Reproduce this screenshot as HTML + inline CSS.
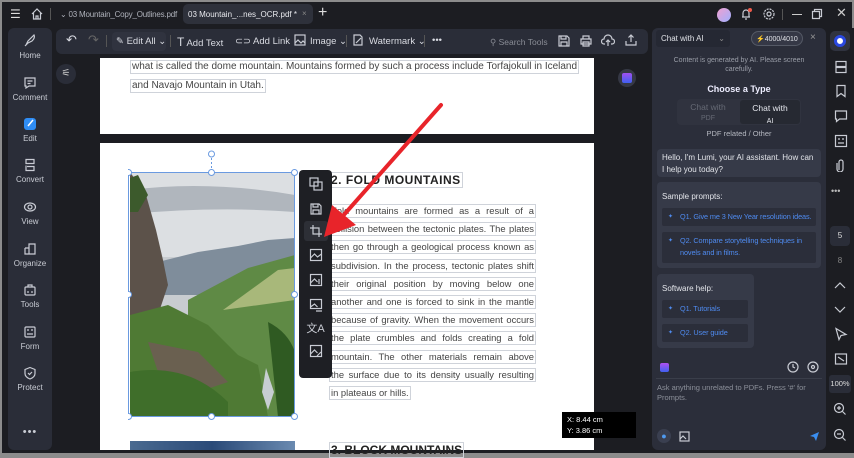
<!DOCTYPE html>
<html><head><meta charset="utf-8"><style>
*{box-sizing:border-box;margin:0;padding:0}
body{width:854px;height:457px;overflow:hidden;background:#8c8c8c;font-family:"Liberation Sans",sans-serif;position:relative}
.a{position:absolute;white-space:nowrap}
#app{left:2px;top:2px;width:850px;height:451px;background:#1c1d22}
.tb{color:#d5d7de;font-size:8px}
.side{left:8px;top:28px;width:44px;height:422px;background:#2a2d38;border-radius:6px}
.si{position:absolute;left:0;width:44px;text-align:center;color:#c9ccd4;font-size:8px}
.si svg{display:block;margin:0 auto 3px}
.tool{left:56px;top:29px;width:592px;height:25px;background:#2a2d38;border-radius:6px}
.tt{position:absolute;top:7px;color:#d9dbe2;font-size:9.5px;white-space:nowrap;line-height:12px}
.page{background:#fff}
.ln{position:absolute;left:130px;font-family:"Liberation Sans",sans-serif;font-size:10px;color:#444;white-space:nowrap;border:1px solid #cfd3da;line-height:12px;padding:0 1px}
.j{left:329px;width:207px;font-size:9.4px;text-align:justify;text-align-last:justify;white-space:normal;overflow:hidden;height:14px}
.chat{left:652px;top:28px;width:174px;height:422px;background:#2b2e3a;border-radius:6px}
.rail{left:828px;top:28px;width:26px;height:425px;background:#1c1d22}
.bub{position:absolute;background:#363a48;border-radius:4px;color:#e3e5ea;font-size:8px;line-height:12px}
.q{position:absolute;background:#2b2e3a;color:#4f8bf0;font-size:7.3px;line-height:12px;padding:3px 4px 3px 18px;border-radius:2px;letter-spacing:-.1px}
.q:before{content:"✦";position:absolute;left:6px;top:3px;font-size:6px;color:#4f8bf0}
.ic{stroke:#c9ccd4;fill:none;stroke-width:1.2}
.ft svg{display:block;margin:7px auto 0}
</style></head><body>
<div id="app" class="a"></div>
<!-- title bar -->
<div class="a tb" style="left:10px;top:7px;font-size:12px;color:#ddd">☰</div>
<svg class="a" style="left:30px;top:7px" width="14" height="14" viewBox="0 0 14 14"><path class="ic" d="M2 7L7 2l5 5M3.5 6v6h7V6M6 12V9h2v3"/></svg>
<div class="a" style="left:50px;top:8px;width:1px;height:12px;background:#555"></div>
<div class="a tb" style="left:60px;top:10px;color:#aeb1ba;letter-spacing:-.2px">⌄ 03 Mountain_Copy_Outlines.pdf</div>
<div class="a" style="left:183px;top:4px;width:130px;height:20px;background:#2e313b;border-radius:5px"></div>
<div class="a tb" style="left:188px;top:10px;color:#e8e9ee">03 Mountain_...nes_OCR.pdf *</div>
<div class="a tb" style="left:302px;top:9px;color:#888">×</div>
<div class="a" style="left:318px;top:4px;color:#ddd;font-size:16px">+</div>
<div class="a" style="left:717px;top:8px;width:14px;height:14px;border-radius:50%;background:linear-gradient(135deg,#f0a0d0,#a0b0ff)"></div>
<svg class="a" style="left:739px;top:7px" width="14" height="14"><path class="ic" d="M3 10h8M4 10V6a3 3 0 016 0v4M6 12h2"/><circle cx="11" cy="3" r="2" fill="#f05a4a"/></svg>
<svg class="a" style="left:762px;top:7px" width="14" height="14"><circle class="ic" cx="7" cy="7" r="2"/><circle class="ic" cx="7" cy="7" r="5" stroke-dasharray="2 1"/></svg>
<div class="a" style="left:782px;top:9px;width:1px;height:11px;background:#555"></div>
<div class="a" style="left:792px;top:14px;width:10px;height:1px;background:#ccc"></div>
<svg class="a" style="left:811px;top:8px" width="12" height="12"><path class="ic" d="M1.5 3.5h7v7h-7zM3.5 3.5V1.5h7v7h-2"/></svg>
<div class="a" style="left:836px;top:5px;color:#ccc;font-size:13px">✕</div>
<!-- sidebar -->
<div class="a side"></div>
<div class="si" style="left:8px;top:34px"><svg width="14" height="14"><path class="ic" d="M3 11l2-4 6-6c1 2 0 4-2 6l-4 2zM3 11l-1 1"/></svg>Home</div>
<div class="si" style="left:8px;top:76px"><svg width="14" height="14"><path class="ic" d="M2 2h10v8H6l-3 2v-2H2zM4.5 5h5M4.5 7.5h3"/></svg>Comment</div>
<div class="si" style="left:8px;top:116px"><svg width="15" height="15"><rect x="1" y="2" width="12" height="12" rx="3" fill="#2f8df5"/><path d="M5 10l5-6" stroke="#fff" stroke-width="1.5"/></svg>Edit</div>
<div class="si" style="left:8px;top:158px"><svg width="14" height="14"><path class="ic" d="M3 1.5h8v4H3zM4 8.5h7v4H3v-5"/></svg>Convert</div>
<div class="si" style="left:8px;top:200px"><svg width="14" height="14"><ellipse class="ic" cx="7" cy="7" rx="5.5" ry="4"/><circle class="ic" cx="7" cy="7" r="2"/></svg>View</div>
<div class="si" style="left:8px;top:242px"><svg width="14" height="14"><path class="ic" d="M6 2h6v10H6zM2 6h4M2 6v6h4"/></svg>Organize</div>
<div class="si" style="left:8px;top:283px"><svg width="14" height="14"><rect class="ic" x="2" y="4" width="10" height="8" rx="1"/><path class="ic" d="M5 4V2h4v2M5 8v2M9 8v2"/></svg>Tools</div>
<div class="si" style="left:8px;top:325px"><svg width="14" height="14"><rect class="ic" x="2" y="2" width="10" height="10" rx="1"/><path class="ic" d="M4 5h2M8 5h2M4 9h6"/></svg>Form</div>
<div class="si" style="left:8px;top:366px"><svg width="14" height="14"><path class="ic" d="M7 1.5l5 2v4c0 3-2.5 4.5-5 5.5C4.5 12 2 10.5 2 7.5v-4zM5 7l1.5 1.5L9 6"/></svg>Protect</div>
<div class="si" style="left:8px;top:426px;font-size:11px;letter-spacing:1px">•••</div>
<!-- toolbar -->
<div class="a tool"></div>
<div class="tt" style="left:66px;top:34px;font-size:13px">↶</div>
<div class="tt" style="left:88px;top:34px;font-size:13px;color:#666">↷</div>
<div class="a" style="left:106px;top:35px;width:1px;height:12px;background:#555"></div>
<div class="a" style="left:112px;top:32px;width:54px;height:19px;background:#30333f;border-radius:4px"></div>
<div class="tt" style="left:116px;top:36px">✎ Edit All ⌄</div>
<div class="a" style="left:170px;top:35px;width:1px;height:12px;background:#555"></div>
<div class="tt" style="left:177px;top:36px"><span style="font-size:12px">T</span> Add Text</div>
<div class="tt" style="left:235px;top:36px">⊂⊃ Add Link</div>
<svg class="a" style="left:294px;top:34px" width="12" height="12"><rect class="ic" x="1" y="1" width="10" height="10"/><path class="ic" d="M1 9l3-3 3 3 2-2 2 2"/></svg>
<div class="tt" style="left:310px;top:36px">Image ⌄</div>
<div class="a" style="left:346px;top:35px;width:1px;height:12px;background:#555"></div>
<svg class="a" style="left:352px;top:34px" width="12" height="12"><path class="ic" d="M2 1h6l2 2v8H2z"/><path class="ic" d="M4 9l5-5"/></svg>
<div class="tt" style="left:369px;top:36px">Watermark ⌄</div>
<div class="a" style="left:424px;top:35px;width:1px;height:12px;background:#555"></div>
<div class="tt" style="left:432px;top:35px">•••</div>
<div class="tt" style="left:490px;top:36px;color:#8a8d96;font-size:8.5px">⚲ Search Tools</div>
<svg class="a" style="left:557px;top:34px" width="14" height="14"><path class="ic" d="M2 2h8l2 2v8H2zM4 2v3h5V2M4 12V8h6v4"/></svg>
<svg class="a" style="left:579px;top:34px" width="14" height="14"><path class="ic" d="M4 5V2h6v3M2 5h10v5H2zM4 8h6v4H4z"/></svg>
<svg class="a" style="left:601px;top:34px" width="14" height="14"><path class="ic" d="M4 10H3a2.5 2.5 0 010-5 4 4 0 018 0 2.5 2.5 0 010 5h-1M7 12V6M5 8l2-2 2 2"/></svg>
<svg class="a" style="left:624px;top:33px" width="14" height="14"><path class="ic" d="M7 9V2M4.5 4.5L7 2l2.5 2.5M2 8v4h10V8"/></svg>
<!-- doc -->
<div class="a" style="left:56px;top:64px;width:20px;height:20px;border-radius:50%;background:#2a2d38;color:#ccc;font-size:10px;text-align:center;line-height:20px">⚟</div>
<div class="a" style="left:618px;top:69px;width:18px;height:18px;border-radius:50%;background:#353845"></div>
<div class="a" style="left:622px;top:73px;width:10px;height:10px;border-radius:2px;background:linear-gradient(#a050f0,#4060f0)"></div>
<div class="a page" style="left:100px;top:58px;width:494px;height:76px"></div>
<div class="ln" style="top:60px">what is called the dome mountain. Mountains formed by such a process include Torfajokull in Iceland</div>
<div class="ln" style="top:79px">and Navajo Mountain in Utah.</div>
<div class="a page" style="left:100px;top:143px;width:494px;height:307px"></div>
<div class="ln" style="left:329px;top:172px;font-weight:bold;font-size:12px;color:#222;letter-spacing:.5px;line-height:14px">2. FOLD MOUNTAINS</div>
<div class="ln j" style="top:204px">Fold mountains are formed as a result of a</div>
<div class="ln j" style="top:222px">collision between the tectonic plates. The plates</div>
<div class="ln j" style="top:240px">then go through a geological process known as</div>
<div class="ln j" style="top:259px">subdivision. In the process, tectonic plates shift</div>
<div class="ln j" style="top:277px">their original position by moving below one</div>
<div class="ln j" style="top:295px">another and one is forced to sink in the mantle</div>
<div class="ln j" style="top:313px">because of gravity. When the movement occurs</div>
<div class="ln j" style="top:331px">the plate crumbles and folds creating a fold</div>
<div class="ln j" style="top:350px">mountain. The other materials remain above</div>
<div class="ln j" style="top:368px">the surface due to its density usually resulting</div>
<div class="ln" style="left:329px;top:386px;font-size:9.4px">in plateaus or hills.</div>
<div class="ln" style="left:329px;top:442px;font-weight:bold;font-size:12px;color:#222;line-height:14px">3. BLOCK MOUNTAINS</div>
<div class="a" style="left:130px;top:441px;width:165px;height:9px;background:linear-gradient(90deg,#4a6a90,#2a4a78,#6a8ab0)"></div>
<!-- image -->
<svg class="a" style="left:128px;top:150px" width="170" height="270" viewBox="0 0 170 270">
<rect x="2" y="22" width="165" height="245" fill="#c8ccd0"/>
<rect x="2" y="22" width="165" height="85" fill="#dcdfe2"/>
<path d="M2 40 Q80 30 167 45 L167 62 Q90 56 2 64z" fill="#b0b6bd"/>
<path d="M30 112 L70 102 L110 96 L140 90 L167 88 L167 145 L30 145z" fill="#7f8d9b"/>
<path d="M60 150 L120 118 L167 105 L167 267 L60 267z" fill="#5f8a45"/>
<path d="M95 160 L150 120 L167 118 L167 150z" fill="#a8b87a"/>
<path d="M2 22 L18 45 L28 80 L35 110 L40 135 L30 165 L2 172z" fill="#5c524a"/>
<path d="M2 28 L10 25 L20 45 L10 62 L2 62z" fill="#3c5a2c"/>
<path d="M2 165 L40 155 L80 175 L110 205 L130 215 L140 267 L2 267z" fill="#4f7a34"/>
<path d="M20 192 L70 202 L100 232 L70 242 L30 222z" fill="#6a6050"/>
<path d="M2 222 Q60 212 100 252 L100 267 L2 267z" fill="#3f6e2a"/>
<path d="M138 218 L146 242 L140 260 L134 242z" fill="#c7ced2"/>
<path d="M140 172 Q160 182 167 202 L167 267 L150 267z" fill="#2f5a22"/>
<rect x="0.5" y="22.5" width="166" height="244" fill="none" stroke="#6a9ae0" stroke-width="1"/>
<line x1="83.5" y1="4" x2="83.5" y2="22" stroke="#6a9ae0" stroke-dasharray="2 2"/>
<g fill="#fff" stroke="#6a9ae0"><circle cx="83.5" cy="4" r="3"/><circle cx="0.5" cy="22.5" r="3"/><circle cx="83.5" cy="22.5" r="3"/><circle cx="166.5" cy="22.5" r="3"/><circle cx="0.5" cy="144.5" r="3"/><circle cx="166.5" cy="144.5" r="3"/><circle cx="0.5" cy="266.5" r="3"/><circle cx="83.5" cy="266.5" r="3"/><circle cx="166.5" cy="266.5" r="3"/></g>
</svg>
<!-- float toolbar -->
<div class="a ft" style="left:299px;top:170px;width:33px;height:208px;background:#1e1f24;border-radius:4px">
<svg width="14" height="14"><rect class="ic" x="1" y="1" width="8" height="8"/><rect class="ic" x="5" y="5" width="8" height="8"/></svg>
<svg width="14" height="14" style="margin-top:11px"><path class="ic" d="M2 2h8l2 2v8H2zM4 2v3h5V2M4 12V8h6v4"/></svg>
<div style="width:24px;height:20px;margin:5px auto 0;background:#2d2f36;border-radius:3px;padding-top:3px"><svg width="14" height="14" style="margin:0 auto"><path class="ic" d="M4 1v9h9M1 4h9v9"/></svg></div>
<svg width="14" height="14" style="margin-top:7px"><rect class="ic" x="1.5" y="1.5" width="11" height="11"/><path class="ic" d="M1.5 10l4-4 3 3 4-3"/></svg>
<svg width="14" height="14" style="margin-top:11px"><rect class="ic" x="1.5" y="1.5" width="11" height="11"/><path class="ic" d="M1.5 10l4-4 3 3M10 6v5"/></svg>
<svg width="14" height="14" style="margin-top:11px"><rect class="ic" x="1.5" y="1.5" width="11" height="9"/><path class="ic" d="M1.5 9l4-3 3 3M7 13h6"/></svg>
<div style="color:#c9ccd4;font-size:11px;text-align:center;margin-top:8px">文A</div>
<svg width="14" height="14" style="margin-top:8px"><rect class="ic" x="1.5" y="1.5" width="11" height="11"/><path class="ic" d="M1.5 10l4-4 3 3M8 12l4-4"/></svg>
</div>
<!-- arrow -->
<svg class="a" style="left:300px;top:95px" width="150" height="160"><path d="M141 10 L42 122" stroke="#e8242a" stroke-width="4" stroke-linecap="round"/><path d="M24 142 L32 110 L56 130z" fill="#e8242a"/></svg>
<!-- coord tooltip -->
<div class="a" style="left:562px;top:412px;width:74px;height:26px;background:#000;color:#fff;font-size:7.5px;line-height:11px;padding:2px 5px">X: 8.44 cm<br>Y: 3.86 cm</div>
<!-- chat -->
<div class="a chat"></div>
<div class="a" style="left:656px;top:30px;width:74px;height:17px;background:#252833;border-radius:3px;color:#dfe1e6;font-size:8px;padding:4px 5px">Chat with AI<span style="float:right;color:#888">⌄</span></div>
<div class="a" style="left:751px;top:31px;width:52px;height:15px;border:1px solid #555a66;border-radius:8px;background:#353846;color:#dfe1e6;font-size:7px;padding:3px 0 0 4px"><span style="color:#f0c030">⚡</span>4000/4010</div>
<div class="a" style="left:810px;top:32px;color:#999;font-size:10px">×</div>
<div class="a" style="left:652px;top:56px;width:174px;text-align:center;color:#9a9ea8;font-size:7px;line-height:9px">Content is generated by AI. Please screen<br>carefully.</div>
<div class="a" style="left:652px;top:84px;width:174px;text-align:center;color:#eef;font-size:9px;font-weight:bold">Choose a Type</div>
<div class="a" style="left:677px;top:99px;width:124px;height:26px;background:#30333f;border-radius:4px"></div>
<div class="a" style="left:740px;top:100px;width:60px;height:24px;background:#262932;border-radius:3px"></div>
<div class="a" style="left:677px;top:102px;width:62px;text-align:center;color:#666a75;font-size:8.5px;line-height:10px">Chat with<br><span style="font-size:7px">PDF</span></div>
<div class="a" style="left:740px;top:102px;width:60px;text-align:center;color:#e6e8ee;font-size:8.5px;line-height:12px">Chat with<br><span style="font-size:7px">AI</span></div>
<div class="a" style="left:652px;top:129px;width:174px;text-align:center;color:#b5b8c0;font-size:7.5px">PDF related / Other</div>
<div class="bub" style="left:657px;top:149px;width:164px;height:28px;padding:3px 5px;white-space:normal">Hello, I'm Lumi, your AI assistant. How can I help you today?</div>
<div class="bub" style="left:657px;top:182px;width:164px;height:86px;padding:9px 5px">Sample prompts:</div>
<div class="q" style="left:662px;top:208px;width:154px;white-space:nowrap">Q1. Give me 3 New Year resolution ideas.</div>
<div class="q" style="left:662px;top:232px;width:154px;height:31px">Q2. Compare storytelling techniques in novels and in films.</div>
<div class="bub" style="left:657px;top:274px;width:97px;height:74px;padding:9px 5px">Software help:</div>
<div class="q" style="left:662px;top:300px;width:86px">Q1. Tutorials</div>
<div class="q" style="left:662px;top:324px;width:86px">Q2. User guide</div>
<div class="a" style="left:660px;top:363px;width:9px;height:9px;border-radius:2px;background:linear-gradient(#b050f0,#4060f0)"></div>
<svg class="a" style="left:787px;top:361px" width="12" height="12"><circle class="ic" cx="6" cy="6" r="5"/><path class="ic" d="M6 3v3l2 1"/></svg>
<svg class="a" style="left:807px;top:361px" width="12" height="12"><circle class="ic" cx="6" cy="6" r="5"/><circle class="ic" cx="6" cy="6" r="1.5"/></svg>
<div class="a" style="left:656px;top:378px;width:166px;height:1px;background:#3a3e4a"></div>
<div class="a" style="left:657px;top:383px;width:160px;color:#8c909a;font-size:7.5px;line-height:10px;white-space:normal">Ask anything unrelated to PDFs. Press '#' for Prompts.</div>
<div class="a" style="left:657px;top:429px;width:14px;height:14px;border-radius:50%;background:#3a3f50;color:#4f9af0;font-size:9px;text-align:center;line-height:14px">●</div>
<svg class="a" style="left:679px;top:430px" width="12" height="12"><rect class="ic" x="1" y="2" width="9" height="9"/><path class="ic" d="M1 9l3-3 3 3"/></svg>
<svg class="a" style="left:809px;top:431px" width="11" height="11"><path d="M1 5L10 1 7 10 5 6z" fill="#3a8ef0"/></svg>
<!-- rail -->
<div class="a rail"></div>
<div class="a" style="left:830px;top:31px;width:20px;height:20px;border-radius:5px;background:#30333f"></div>
<div class="a" style="left:834px;top:35px;width:12px;height:12px;border-radius:50%;background:#fff;border:3px solid #2a48e0"></div>
<svg class="a" style="left:834px;top:60px" width="14" height="14"><rect class="ic" x="2" y="1.5" width="10" height="5"/><rect class="ic" x="2" y="7.5" width="10" height="5"/></svg>
<svg class="a" style="left:834px;top:84px" width="14" height="14"><path class="ic" d="M3 1.5h8v11l-4-3-4 3z"/></svg>
<svg class="a" style="left:834px;top:109px" width="14" height="14"><path class="ic" d="M1.5 2h11v8h-7l-3 2.5V10h-1z"/></svg>
<svg class="a" style="left:834px;top:134px" width="14" height="14"><rect class="ic" x="1.5" y="1.5" width="11" height="11"/><path class="ic" d="M4 5h2M8 5h2M4 9h6"/></svg>
<svg class="a" style="left:834px;top:158px" width="14" height="14"><path class="ic" d="M5 12V4a2 2 0 014 0v7a3 3 0 01-6 0V5"/></svg>
<div class="a" style="left:831px;top:186px;color:#bbb;font-size:9px">•••</div>
<div class="a" style="left:830px;top:226px;width:20px;height:20px;background:#2a2d38;border-radius:4px;color:#ddd;font-size:8px;text-align:center;line-height:20px">5</div>
<div class="a" style="left:830px;top:256px;width:20px;color:#888;font-size:8px;text-align:center">8</div>
<svg class="a" style="left:834px;top:280px" width="12" height="10"><path class="ic" d="M1 8l5-5 5 5"/></svg>
<svg class="a" style="left:834px;top:305px" width="12" height="10"><path class="ic" d="M1 2l5 5 5-5"/></svg>
<svg class="a" style="left:834px;top:327px" width="14" height="14"><path class="ic" d="M2 1.5l10 6-5 1-2 4z"/></svg>
<svg class="a" style="left:834px;top:352px" width="14" height="14"><rect class="ic" x="1.5" y="2" width="11" height="10"/><path class="ic" d="M4 5l6 4"/></svg>
<div class="a" style="left:829px;top:375px;width:22px;height:18px;background:#2a2d38;border-radius:3px;color:#ddd;font-size:7.5px;text-align:center;line-height:18px">100%</div>
<svg class="a" style="left:833px;top:402px" width="14" height="14"><circle class="ic" cx="6" cy="6" r="4.5"/><path class="ic" d="M9.5 9.5l3 3M4 6h4M6 4v4"/></svg>
<svg class="a" style="left:833px;top:428px" width="14" height="14"><circle class="ic" cx="6" cy="6" r="4.5"/><path class="ic" d="M9.5 9.5l3 3M4 6h4"/></svg>
</body></html>
